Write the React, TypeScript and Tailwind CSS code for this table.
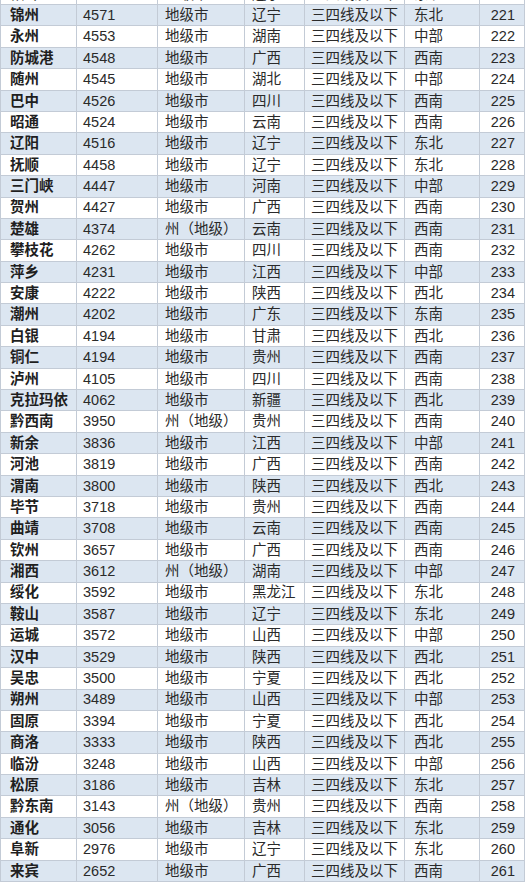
const rows: [string, string, string, string, string, string][] = [
  ["锦州", "4571", "地级市", "辽宁", "东北", "221"],
  ["永州", "4553", "地级市", "湖南", "中部", "222"],
  ["防城港", "4548", "地级市", "广西", "西南", "223"],
  ["随州", "4545", "地级市", "湖北", "中部", "224"],
  ["巴中", "4526", "地级市", "四川", "西南", "225"],
  ["昭通", "4524", "地级市", "云南", "西南", "226"],
  ["辽阳", "4516", "地级市", "辽宁", "东北", "227"],
  ["抚顺", "4458", "地级市", "辽宁", "东北", "228"],
  ["三门峡", "4447", "地级市", "河南", "中部", "229"],
  ["贺州", "4427", "地级市", "广西", "西南", "230"],
  ["楚雄", "4374", "州（地级）", "云南", "西南", "231"],
  ["攀枝花", "4262", "地级市", "四川", "西南", "232"],
  ["萍乡", "4231", "地级市", "江西", "中部", "233"],
  ["安康", "4222", "地级市", "陕西", "西北", "234"],
  ["潮州", "4202", "地级市", "广东", "东南", "235"],
  ["白银", "4194", "地级市", "甘肃", "西北", "236"],
  ["铜仁", "4194", "地级市", "贵州", "西南", "237"],
  ["泸州", "4105", "地级市", "四川", "西南", "238"],
  ["克拉玛依", "4062", "地级市", "新疆", "西北", "239"],
  ["黔西南", "3950", "州（地级）", "贵州", "西南", "240"],
  ["新余", "3836", "地级市", "江西", "中部", "241"],
  ["河池", "3819", "地级市", "广西", "西南", "242"],
  ["渭南", "3800", "地级市", "陕西", "西北", "243"],
  ["毕节", "3718", "地级市", "贵州", "西南", "244"],
  ["曲靖", "3708", "地级市", "云南", "西南", "245"],
  ["钦州", "3657", "地级市", "广西", "西南", "246"],
  ["湘西", "3612", "州（地级）", "湖南", "中部", "247"],
  ["绥化", "3592", "地级市", "黑龙江", "东北", "248"],
  ["鞍山", "3587", "地级市", "辽宁", "东北", "249"],
  ["运城", "3572", "地级市", "山西", "中部", "250"],
  ["汉中", "3529", "地级市", "陕西", "西北", "251"],
  ["吴忠", "3500", "地级市", "宁夏", "西北", "252"],
  ["朔州", "3489", "地级市", "山西", "中部", "253"],
  ["固原", "3394", "地级市", "宁夏", "西北", "254"],
  ["商洛", "3333", "地级市", "陕西", "西北", "255"],
  ["临汾", "3248", "地级市", "山西", "中部", "256"],
  ["松原", "3186", "地级市", "吉林", "东北", "257"],
  ["黔东南", "3143", "州（地级）", "贵州", "西南", "258"],
  ["通化", "3056", "地级市", "吉林", "东北", "259"],
  ["阜新", "2976", "地级市", "辽宁", "东北", "260"],
  ["来宾", "2652", "地级市", "广西", "西南", "261"],
];

const grid =
  "grid grid-cols-[77px_81px_87px_60px_100px_75px_45px] h-[21.4px] border-b border-[#c3cbd6] items-center";
const cell = "h-full flex items-center border-r border-[#c3cbd6] whitespace-nowrap overflow-hidden";

function Row({ r, shaded }: { r: (typeof rows)[number]; shaded: boolean }) {
  const [city, value, kind, prov, region, rank] = r;
  return (
    <div className={`${grid} ${shaded ? "bg-[#dce6f1]" : "bg-white"}`}>
      <div className={`${cell} pl-[9px] font-bold text-[#1f1f1f] border-l`}>{city}</div>
      <div className={`${cell} pl-[6px]`}>{value}</div>
      <div className={`${cell} pl-[7px]`}>{kind}</div>
      <div className={`${cell} pl-[7px]`}>{prov}</div>
      <div className={`${cell} pl-[6px]`}>三四线及以下</div>
      <div className={`${cell} pl-[9px]`}>{region}</div>
      <div className={`${cell} justify-end pr-[9px]`}>{rank}</div>
    </div>
  );
}

export default function App() {
  return (
    <div
      className="w-[525px] h-[886px] overflow-hidden bg-white text-[14.5px] leading-none text-[#2a2a2a]"
      style={{ fontFamily: '"Liberation Sans", "Noto Sans CJK SC", sans-serif' }}
    >
      {/* previous row, cut off at the top */}
      <div className="h-[5px] overflow-hidden">
        <div className="-mt-[16.4px]">
          <Row r={["铁岭", "4590", "地级市", "辽宁", "东北", "220"]} shaded={false} />
        </div>
      </div>
      {rows.map((r, i) => (
        <Row key={r[5]} r={r} shaded={i % 2 === 0} />
      ))}
    </div>
  );
}
